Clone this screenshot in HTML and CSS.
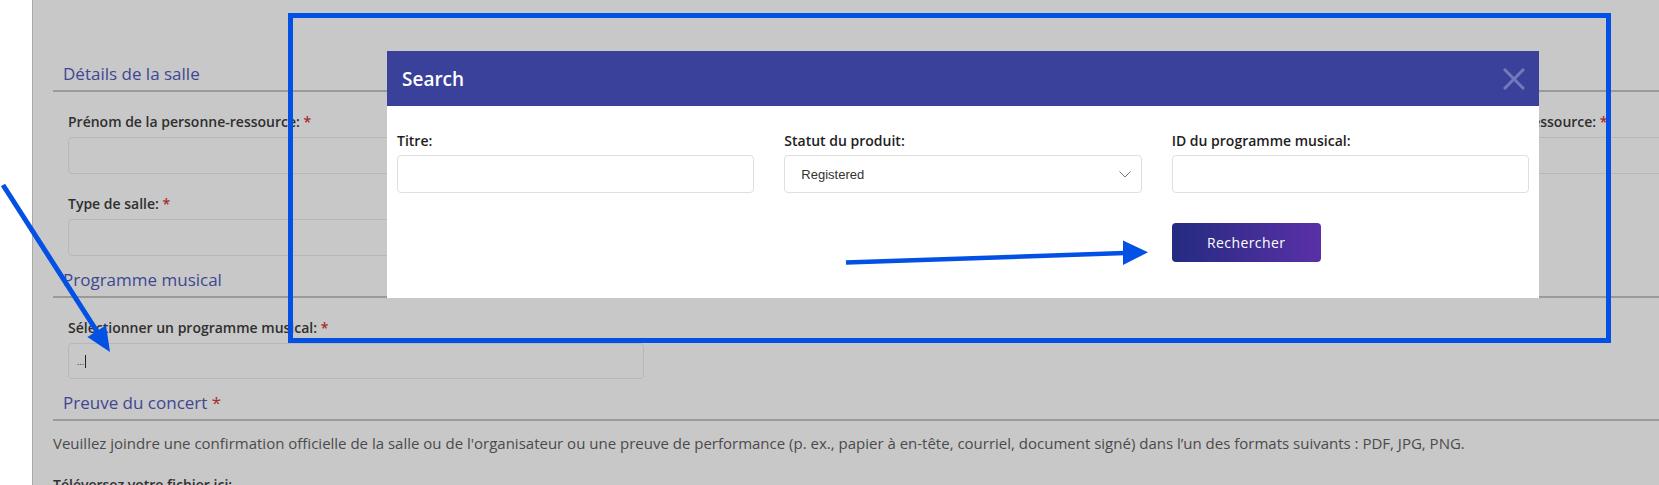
FILE: index.html
```html
<!DOCTYPE html>
<html lang="fr">
<head>
<meta charset="utf-8">
<title>Recherche de programme musical</title>
<link rel="stylesheet" href="styles.css">
</head>
<body>
  <div class="gutter"></div>
  <main class="page">
    <section class="section">
      <h2 class="sec-title">Détails de la salle</h2>
      <div class="fields">
        <div class="row">
          <div class="field">
            <label>Prénom de la personne-ressource: <span class="req">*</span></label>
            <div class="box"></div>
          </div>
          <div class="field">
            <label>Nom de la personne-ressource: <span class="req">*</span></label>
            <div class="box"></div>
          </div>
        </div>
        <div class="row">
          <div class="field">
            <label>Type de salle: <span class="req">*</span></label>
            <div class="box"></div>
          </div>
        </div>
      </div>
    </section>
    <section class="section">
      <h2 class="sec-title">Programme musical</h2>
      <div class="fields">
        <div class="field">
          <label>Sélectionner un programme musical: <span class="req">*</span></label>
          <div class="box box-program"><span class="dots">...</span><span class="caret"></span></div>
        </div>
      </div>
    </section>
    <section class="section">
      <h2 class="sec-title">Preuve du concert <span class="req">*</span></h2>
      <p class="note">Veuillez joindre une confirmation officielle de la salle ou de l'organisateur ou une preuve de performance (p. ex., papier à en-tête, courriel, document signé) dans l’un des formats suivants : PDF, JPG, PNG.</p>
      <p class="upload">Téléversez votre fichier ici:</p>
    </section>
  </main>

  <div class="modal">
    <div class="modal-head">
      <h3 class="modal-title">Search</h3>
      <span class="close">
        <svg width="22" height="22" viewBox="0 0 22 22"><path d="M1 1 L21 21 M21 1 L1 21" stroke="#737abb" stroke-width="3" fill="none"/></svg>
      </span>
    </div>
    <div class="modal-body">
      <div class="mfield">
        <label>Titre:</label>
        <div class="minput"></div>
      </div>
      <div class="mfield">
        <label>Statut du produit:</label>
        <div class="minput select">
          <span>Registered</span>
          <svg width="12" height="7" viewBox="0 0 12 7"><path d="M0.5 0.5 L6 6 L11.5 0.5" stroke="#777" stroke-width="1" fill="none"/></svg>
        </div>
      </div>
      <div class="mfield">
        <label>ID du programme musical:</label>
        <div class="minput"></div>
      </div>
      <button class="btn">Rechercher</button>
    </div>
  </div>

  <svg class="annot" width="1659" height="485" viewBox="0 0 1659 485">
    <rect x="290.5" y="15.5" width="1318" height="325" fill="none" stroke="#0350e4" stroke-width="5"/>
    <line x1="846" y1="262.5" x2="1125" y2="253" stroke="#0350e4" stroke-width="4.5"/>
    <polygon points="1148,252.3 1123,240.5 1123,265" fill="#0350e4"/>
    <line x1="3" y1="185" x2="98" y2="333" stroke="#0350e4" stroke-width="5"/>
    <polygon points="110,352 87.4,337.1 106,325.3" fill="#0350e4"/>
  </svg>
</body>
</html>
```

FILE: styles.css
```css
* { box-sizing: border-box; }

html, body { margin: 0; padding: 0; }

body {
  width: 1659px;
  height: 485px;
  overflow: hidden;
  position: relative;
  display: flex;
  background: #fff;
  font-family: "Open Sans", "Liberation Sans", sans-serif;
}

.gutter {
  flex: 0 0 33px;
  background: #fff;
  border-right: 1px solid #a9a9a9;
}

.page {
  flex: 0 0 1700px;
  background: #c8c8c8;
  padding: 63px 0 0 20px;
}

.section + .section { margin-top: 13px; }

.sec-title {
  margin: 0;
  padding: 0 10px 5px;
  font-size: 17px;
  line-height: 22px;
  font-weight: 400;
  color: #3f4692;
  border-bottom: 2px solid #9a9a9a;
}

.req { color: #a82a2a; }

.fields {
  margin-top: 21px;
  padding-left: 15px;
  display: flex;
  flex-direction: column;
  gap: 21px;
}

.row {
  display: grid;
  grid-template-columns: 1287px 600px;
  column-gap: 30px;
}

.field label {
  display: block;
  margin-bottom: 6px;
  font-size: 14px;
  line-height: 18px;
  font-weight: 600;
  color: #2f2f2f;
}

.box {
  height: 37px;
  border: 1px solid #b8b8b8;
  border-radius: 4px;
}

.box-program {
  width: 576px;
  height: 36px;
  display: flex;
  align-items: center;
  padding-left: 8px;
  font-size: 9px;
  color: #333;
}

.caret {
  display: inline-block;
  width: 1px;
  height: 13px;
  background: #222;
  margin-left: 1px;
}

.note {
  margin: 12px 0 0;
  font-size: 15px;
  line-height: 20px;
  color: #4b4b4b;
}

.upload {
  margin: 23px 0 0;
  font-size: 14px;
  line-height: 18px;
  font-weight: 600;
  color: #2f2f2f;
}

/* Modal */
.modal {
  position: absolute;
  left: 387px;
  top: 51px;
  width: 1152px;
  background: #fff;
}

.modal-head {
  height: 55px;
  background: #39419b;
  display: flex;
  align-items: center;
  justify-content: space-between;
  padding: 0 14px 0 15px;
}

.modal-title {
  margin: 0;
  color: #fff;
  font-size: 19px;
  font-weight: 600;
  line-height: 24px;
}

.close { display: flex; }

.modal-body {
  display: grid;
  grid-template-columns: repeat(3, 1fr);
  column-gap: 30px;
  row-gap: 30px;
  padding: 26px 10px 36px;
}

.mfield label {
  display: block;
  margin-bottom: 5px;
  font-size: 14px;
  line-height: 18px;
  font-weight: 600;
  color: #1e1e1e;
}

.minput {
  height: 38px;
  border: 1px solid #dfdfdf;
  border-radius: 4px;
  background: #fff;
}

.select {
  display: flex;
  align-items: center;
  justify-content: space-between;
  padding: 0 10px 0 16px;
  font-family: "Liberation Sans", Arial, sans-serif;
  font-size: 13px;
  color: #333;
}

.btn {
  grid-column: 3;
  width: 149px;
  height: 39px;
  border: 0;
  border-radius: 4px;
  background: linear-gradient(90deg, #242b80, #5a30a7);
  color: #fff;
  font-family: "Open Sans", sans-serif;
  font-size: 14px;
  font-weight: 500;
  letter-spacing: 0.4px;
}

.annot {
  position: absolute;
  left: 0;
  top: 0;
  pointer-events: none;
}
```
